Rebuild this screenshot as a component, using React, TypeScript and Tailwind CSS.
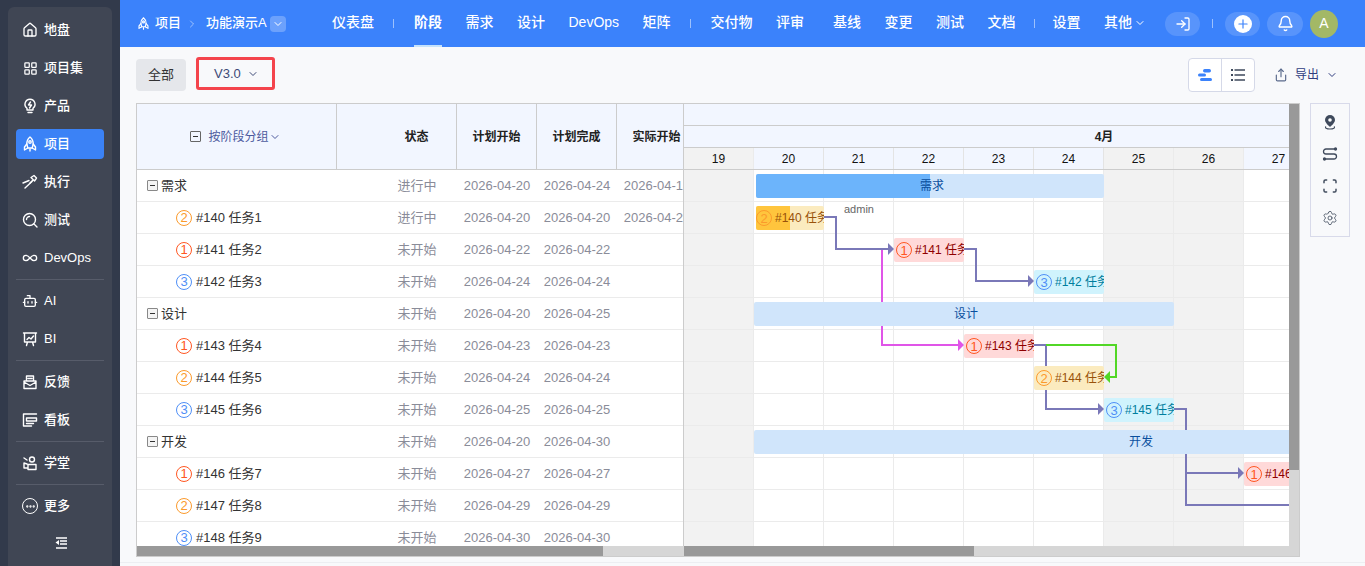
import React from 'react';
import {
  Bell,
  Bot,
  ChevronDown,
  ChevronRight,
  Ellipsis,
  House,
  Infinity as InfinityIcon,
  LayoutGrid,
  LogIn,
  Plus,
  Scan,
  Settings,
  Share,
} from 'lucide-react';

const LABELS = { 1: 'border-[#ff5722] text-[#ff5722]', 2: 'border-[#fb9a2c] text-[#fb9a2c]', 3: 'border-[#4f8ff7] text-[#4f8ff7]' };

const Glyph = ({ size = 16, children }: { size?: number; children: React.ReactNode }) => (
  <svg width={size} height={size} viewBox="0 0 16 16" fill="none" stroke="currentColor" strokeWidth="1.400" strokeLinejoin="round" strokeLinecap="round">
    {children}
  </svg>
);

const RocketIcon = ({ size = 16 }: { size?: number }) => (
  <Glyph size={size}>
    <path d="M8 1c2.500 2 3.200 4.500 3.200 7l-1 4H5.800l-1-4C4.800 5.500 5.500 3 8 1z" />
    <path d="M4.800 8L2.500 11v3l3.300-2M11.200 8l2.300 3v3l-3.300-2M8 13v2" />
    <circle cx="8" cy="6" r="1.200" />
  </Glyph>
);

const BulbIcon = () => (
  <Glyph>
    <path d="M8 1.200a5 5 0 0 0-3 9v1.800h6v-1.800a5 5 0 0 0-3-9zM6 14.500h4" />
    <path d="M8.500 4l-2 3h3l-2 3" />
  </Glyph>
);

const DartIcon = () => (
  <Glyph>
    <path d="M1 9l6-2.500M3 14l7-6.500" />
    <path d="M9 3.500l3.500 3.500 2-3-2.500-2.500zM11 6L8 9" />
  </Glyph>
);

const TestIcon = () => (
  <Glyph>
    <circle cx="7.500" cy="7.500" r="6" />
    <path d="M12 12l3 3M4.500 7.500a3 3 0 0 1 3-3" />
  </Glyph>
);

const ScreenIcon = () => (
  <Glyph>
    <path d="M1.500 2h13M2.500 2v9h11V2M5 8.500l2-2 2 1.500 2.500-3M5.500 11l-1 3.500M10.500 11l1 3.500" />
  </Glyph>
);

const FeedbackIcon = () => (
  <Glyph>
    <path d="M4.500 7V2h7v5M2 7h12v7.500H2zM2 8l6 3.500L14 8M6 4.500h4" />
  </Glyph>
);

const BoardIcon = () => (
  <Glyph>
    <path d="M1.500 2h13M1.500 2v12M4.500 6h10v3h-10zM1.500 14h8M4.500 11.500h7" />
  </Glyph>
);

const SchoolIcon = () => (
  <Glyph>
    <circle cx="10" cy="4.500" r="2.500" />
    <path d="M6 9.500h8v5H6zM2 3l3 2M2 8l3 1M2 8v5h3" />
  </Glyph>
);

const CollapseIcon = () => (
  <svg width="14" height="14" viewBox="0 0 14 14" fill="none" stroke="currentColor" strokeWidth="1.500">
    <path d="M2 2h11M6 5h7M6 8h7M2 12h11" />
    <path d="M5 4v5L1.500 6.500z" fill="currentColor" stroke="none" />
  </svg>
);

const NAV_GROUPS = [
  [
    { name: '地盘', icon: <House size={16} /> },
    { name: '项目集', icon: <LayoutGrid size={15} /> },
    { name: '产品', icon: <BulbIcon /> },
    { name: '项目', icon: <RocketIcon />, active: true },
    { name: '执行', icon: <DartIcon /> },
    { name: '测试', icon: <TestIcon /> },
    { name: 'DevOps', icon: <InfinityIcon size={16} /> },
  ],
  [
    { name: 'AI', icon: <Bot size={16} /> },
    { name: 'BI', icon: <ScreenIcon /> },
  ],
  [
    { name: '反馈', icon: <FeedbackIcon /> },
    { name: '看板', icon: <BoardIcon /> },
  ],
  [{ name: '学堂', icon: <SchoolIcon /> }],
];

const Sidebar = () => (
  <aside className="w-[120px] shrink-0 bg-[#323a4b] px-2 pt-[7px]">
    <div className="flex h-[559px] flex-col rounded-t-md bg-[#404654] px-2 pt-[8px] text-[13px] font-medium text-white">
      {NAV_GROUPS.map((group, i) => (
        <div key={i} className="flex flex-col gap-2 border-b border-[#575c6a] pb-[6px] [&:not(:first-child)]:pt-[6px]">
          {group.map(item => (
            <div key={item.name} className={`flex h-[30px] items-center gap-[6px] rounded pl-[6px] ${item.active ? 'bg-[#3b82f6]' : ''}`}>
              <span className="flex w-4 justify-center">{item.icon}</span>
              <span>{item.name}</span>
            </div>
          ))}
        </div>
      ))}
      <div className="flex h-[30px] items-center gap-[6px] pl-[6px] pt-[12px]">
        <span className="flex h-4 w-4 items-center justify-center rounded-full border border-white">
          <Ellipsis size={11} strokeWidth={3} />
        </span>
        <span>更多</span>
      </div>
      <div className="mt-[21px] flex h-[14px] justify-center pl-[1px]">
        <CollapseIcon />
      </div>
    </div>
  </aside>
);

const Sep = () => <span className="h-[9px] w-px bg-white/50" />;

const NavText = ({ children, active }: { children: React.ReactNode; active?: boolean }) => (
  <span className={`relative flex h-[47px] items-center pb-[2px] ${active ? 'font-bold' : 'font-medium'}`}>
    {children}
    {active && <span className="absolute bottom-0 left-0 right-0 h-[2px] bg-[#c5e2fb]" />}
  </span>
);

const Topbar = () => (
  <header className="flex h-[47px] shrink-0 items-center bg-[#3b82fb] pr-[27px] text-white">
    <div className="flex w-[212px] items-center pl-[17px] text-[13px] font-medium">
      <RocketIcon size={13} />
      <span className="mb-[2px] ml-[5px]">项目</span>
      <ChevronRight size={12} className="ml-[5px] text-white/50" />
      <span className="mb-[2px] ml-2">功能演示A</span>
      <span className="ml-[3px] flex h-4 w-4 items-center justify-center rounded-sm bg-white/25">
        <ChevronDown size={12} />
      </span>
    </div>
    <nav className="flex items-center text-[14px]">
      <NavText>仪表盘</NavText>
      <span className="ml-[19px] mr-5 flex"><Sep /></span>
      <div className="flex gap-[23.500px]">
        <NavText active>阶段</NavText>
        <NavText>需求</NavText>
        <NavText>设计</NavText>
        <NavText>DevOps</NavText>
        <NavText>矩阵</NavText>
      </div>
      <span className="ml-[19px] mr-5 flex"><Sep /></span>
      <div className="flex gap-[23.500px]">
        <NavText>交付物</NavText>
        <NavText>评审</NavText>
      </div>
      <div className="ml-[29px] flex gap-[23.500px]">
        <NavText>基线</NavText>
        <NavText>变更</NavText>
        <NavText>测试</NavText>
        <NavText>文档</NavText>
      </div>
      <span className="ml-[18px] mr-[18px] flex"><Sep /></span>
      <div className="flex gap-[23.500px]">
        <NavText>设置</NavText>
        <NavText>
          其他
          <ChevronDown size={12} className="ml-[2px]" />
        </NavText>
      </div>
    </nav>
    <div className="ml-auto flex h-6 w-[35px] items-center justify-center rounded-full bg-white/15">
      <LogIn size={16} />
    </div>
    <span className="mx-3 flex"><Sep /></span>
    <div className="flex h-6 w-[35px] items-center justify-center rounded-full bg-white/15">
      <span className="flex h-[18px] w-[18px] items-center justify-center rounded-full bg-white text-[#3b82fb]">
        <Plus size={14} />
      </span>
    </div>
    <div className="ml-[7px] flex h-6 w-[36px] items-center justify-center rounded-full bg-white/15">
      <Bell size={17} />
    </div>
    <div className="ml-[7px] flex h-7 w-7 items-center justify-center rounded-full bg-[#a3b866] text-[14px]">A</div>
  </header>
);

const GanttViewIcon = () => (
  <svg width="16" height="16" viewBox="0 0 16 16" fill="#3b82fb">
    <rect x="6" y="2" width="8" height="3.500" rx="1.700" />
    <rect x="1" y="6.500" width="8" height="3" rx="1.500" />
    <rect x="3" y="11" width="12" height="3" rx="1.500" />
  </svg>
);

const ListViewIcon = () => (
  <svg width="16" height="14" viewBox="0 0 16 14" fill="none" stroke="#3f4a5c" strokeWidth="1.400">
    <path d="M4.500 2h10.500M4.500 7h10.500M4.500 12h10.500" />
    <path d="M1 2h2M1 7h2M1 12h2" strokeWidth="2" />
  </svg>
);

const Toolbar = () => (
  <div className="flex h-14 shrink-0 items-center pl-4 pr-[27px]">
    <div className="flex h-8 w-[50px] items-center justify-center rounded-sm bg-[#e5e7eb] text-[13px] text-[#333]">全部</div>
    <div className="mb-[3px] ml-[10px] flex h-[33px] w-[79px] items-center gap-[6px] rounded-[3px] border-[3px] border-[#f4444c] pl-[15px] text-[13px] text-[#3d4a77]">
      V3.0
      <ChevronDown size={12} />
    </div>
    <div className="ml-auto flex h-[34px] w-[67px] rounded-sm border border-[#d5d9e8] bg-white">
      <span className="flex w-[33px] items-center justify-center border-r border-[#d5d9e8]"><GanttViewIcon /></span>
      <span className="flex flex-1 items-center justify-center"><ListViewIcon /></span>
    </div>
    <div className="ml-[19px] flex items-center text-[12px] text-[#2f3c7e]">
      <Share size={14} className="text-[#5a6a8c]" />
      <span className="ml-[7px]">导出</span>
      <ChevronDown size={12} className="ml-[7px]" />
    </div>
  </div>
);

type Row = { name: string; status: string; start: string; end: string; actual?: string; pri?: 1 | 2 | 3 };

const ROWS: Row[] = [
  { name: '需求', status: '进行中', start: '2026-04-20', end: '2026-04-24', actual: '2026-04-18' },
  { name: '#140 任务1', pri: 2, status: '进行中', start: '2026-04-20', end: '2026-04-20', actual: '2026-04-20' },
  { name: '#141 任务2', pri: 1, status: '未开始', start: '2026-04-22', end: '2026-04-22' },
  { name: '#142 任务3', pri: 3, status: '未开始', start: '2026-04-24', end: '2026-04-24' },
  { name: '设计', status: '未开始', start: '2026-04-20', end: '2026-04-25' },
  { name: '#143 任务4', pri: 1, status: '未开始', start: '2026-04-23', end: '2026-04-23' },
  { name: '#144 任务5', pri: 2, status: '未开始', start: '2026-04-24', end: '2026-04-24' },
  { name: '#145 任务6', pri: 3, status: '未开始', start: '2026-04-25', end: '2026-04-25' },
  { name: '开发', status: '未开始', start: '2026-04-20', end: '2026-04-30' },
  { name: '#146 任务7', pri: 1, status: '未开始', start: '2026-04-27', end: '2026-04-27' },
  { name: '#147 任务8', pri: 2, status: '未开始', start: '2026-04-29', end: '2026-04-29' },
  { name: '#148 任务9', pri: 3, status: '未开始', start: '2026-04-30', end: '2026-04-30' },
];

const Pri = ({ n }: { n: 1 | 2 | 3 }) => (
  <span className={`flex h-4 w-4 shrink-0 items-center justify-center rounded-full border text-[13px] leading-none ${LABELS[n]}`}>{n}</span>
);

const MinusBox = ({ className }: { className: string }) => (
  <span className={`flex h-[11px] w-[11px] shrink-0 items-center justify-center rounded-[1px] border ${className}`}>
    <span className="h-px w-[5px] bg-[#333]" />
  </span>
);

const HeadCell = ({ children, className }: { children: React.ReactNode; className: string }) => (
  <div className={`flex items-center justify-center border-r border-[#ccc] text-[12px] font-bold text-[#222] ${className}`}>{children}</div>
);

const LeftTable = () => (
  <div className="w-[547px] shrink-0 overflow-hidden border-r border-[#ccc]">
    <div className="w-[600px]">
      <div className="flex h-[66px] border-b border-[#ccc] bg-[#f2f6ff]">
        <div className="flex w-[200px] items-center justify-center border-r border-[#ccc] pr-[2px] text-[12px] text-[#4d5a9e]">
          <MinusBox className="border-[#666]" />
          <span className="ml-[7px]">按阶段分组</span>
          <ChevronDown size={12} />
        </div>
        <HeadCell className="w-[120px] pl-[40px]">状态</HeadCell>
        <HeadCell className="w-[80px]">计划开始</HeadCell>
        <HeadCell className="w-[80px]">计划完成</HeadCell>
        <HeadCell className="w-[80px]">实际开始</HeadCell>
      </div>
      {ROWS.map(row => (
        <div key={row.name} className="flex h-8 items-center border-b border-[#ebebeb] text-[13px] text-[#8a8c99]">
          <div className={`flex w-[200px] items-center text-[#333] ${row.pri ? 'pl-[39px]' : 'pl-[10px]'}`}>
            {row.pri ? <Pri n={row.pri} /> : <MinusBox className="border-[#888] bg-[#f4f4f4]" />}
            <span className={row.pri ? 'ml-1' : 'ml-[3px]'}>{row.name}</span>
          </div>
          <div className="w-[120px] pl-[40px] text-center">{row.status}</div>
          <div className="w-[80px] text-center">{row.start}</div>
          <div className="w-[80px] text-center">{row.end}</div>
          <div className="w-[80px] text-center">{row.actual}</div>
        </div>
      ))}
    </div>
  </div>
);

const DAYS = [19, 20, 21, 22, 23, 24, 25, 26, 27];
const isOff = (d: number) => d === 19 || d === 25 || d === 26;

type Bar = { x: number; y: number; w: number; label: string; pri?: 1 | 2 | 3; progress?: number };

const GROUP_BARS: Bar[] = [
  { x: 72, y: 4, w: 348, label: '需求', progress: 174 },
  { x: 70, y: 132, w: 420, label: '设计' },
  { x: 70, y: 260, w: 770, label: '开发' },
];

const TASK_BARS: Bar[] = [
  { x: 72, y: 36, w: 68, label: '#140 任务1', pri: 2, progress: 34 },
  { x: 210, y: 68, w: 70, label: '#141 任务2', pri: 1 },
  { x: 350, y: 100, w: 70, label: '#142 任务3', pri: 3 },
  { x: 280, y: 164, w: 70, label: '#143 任务4', pri: 1 },
  { x: 350, y: 196, w: 70, label: '#144 任务5', pri: 2 },
  { x: 420, y: 228, w: 70, label: '#145 任务6', pri: 3 },
  { x: 560, y: 292, w: 70, label: '#146 任务7', pri: 1 },
];

const TASK_TONE = {
  1: 'bg-[#ffd9d9] text-[#8f0000]',
  2: 'bg-[#fbebbf] text-[#99520a]',
  3: 'bg-[#d0f3fd] text-[#007e9e]',
};

// coordinates are relative to the chart body: x - 684, y - 170
const Links = () => (
  <svg className="absolute left-0 top-0" width="605" height="376" fill="none" strokeWidth="2">
    <path d="M198 79h6M198 79v96h76" stroke="#e055e8" />
    <path d="M274 169l6 6-6 6z" fill="#e055e8" />
    <g stroke="#7a78b8">
      <path d="M140 47h12v32h52" />
      <path d="M280 79h12v32h52" />
      <path d="M350 175h12v64h52" />
      <path d="M490 239h12v64h52M502 303v32h110" />
    </g>
    <g fill="#7a78b8">
      <path d="M204 73l6 6-6 6z" />
      <path d="M344 105l6 6-6 6z" />
      <path d="M414 233l6 6-6 6z" />
      <path d="M554 297l6 6-6 6z" />
    </g>
    <path d="M362 175h70v32h-8" stroke="#52d726" />
    <path d="M426 201l-6 6 6 6z" fill="#52d726" />
  </svg>
);

const Chart = () => (
  <div className="min-w-0 flex-1 overflow-hidden">
    <div className="h-[22px] w-[630px] border-b border-[#ccc] bg-[#f2f6ff]" />
    <div className="flex h-[22px] w-[630px] items-center justify-center border-b border-[#ccc] bg-[#f2f6ff] pl-[210px] text-[12px] font-bold text-[#222]">4月</div>
    <div className="flex h-[22px] w-[630px] border-b border-[#ccc]">
      {DAYS.map(d => (
        <div
          key={d}
          className={`flex w-[70px] shrink-0 items-center justify-center border-r text-[12px] text-[#111] ${isOff(d) ? 'border-[#ebebeb] bg-[#f2f2f2]' : 'border-[#e4e4e4] bg-[#f2f6ff]'}`}
        >
          {d}
        </div>
      ))}
    </div>
    <div className="relative w-[630px]">
      {ROWS.map(row => (
        <div key={row.name} className="flex h-8">
          {DAYS.map(d => (
            <div key={d} className={`w-[70px] shrink-0 border-b border-r border-[#ebebeb] ${isOff(d) ? 'bg-[#f2f2f2]' : 'bg-white'}`} />
          ))}
        </div>
      ))}
      <Links />
      {GROUP_BARS.map(bar => (
        <div
          key={bar.label}
          className="absolute flex h-6 items-center justify-center overflow-hidden rounded-[2px] bg-[#d0e5fb] pl-1 text-[12px] text-[#0a4f9e]"
          style={{ left: bar.x, top: bar.y, width: bar.w }}
        >
          {bar.progress && <span className="absolute bottom-0 left-0 top-0 bg-[#6cb4fb]" style={{ width: bar.progress }} />}
          <span className="relative">{bar.label}</span>
        </div>
      ))}
      {TASK_BARS.map(bar => (
        <div
          key={bar.label}
          className={`absolute flex h-6 items-center overflow-hidden whitespace-nowrap rounded-[2px] text-[12px] ${bar.progress ? '' : 'pl-[2px]'} ${TASK_TONE[bar.pri!]}`}
          style={{ left: bar.x, top: bar.y, width: bar.w }}
        >
          {bar.progress && <span className="absolute bottom-0 left-0 top-0 bg-[#ffc53d]" style={{ width: bar.progress }} />}
          <span className="relative flex items-center">
            <Pri n={bar.pri!} />
            <span className="ml-[3px]">{bar.label}</span>
          </span>
        </div>
      ))}
      <span className="absolute left-[160px] top-[31px] text-[11px] text-[#666]">admin</span>
    </div>
  </div>
);

const Gantt = () => (
  <div className="flex h-[454px] w-[1164px] shrink-0 border border-[#ccc] bg-white">
    <div className="flex w-[1152px] flex-col">
      <div className="flex h-[442px] overflow-hidden">
        <LeftTable />
        <Chart />
      </div>
      <div className="flex h-[10px] bg-[#d6d6d6]">
        <div className="w-[547px]">
          <div className="h-full w-[466px] bg-[#999]" />
        </div>
        <div className="h-full w-[290px] bg-[#999]" />
      </div>
    </div>
    <div className="w-[10px] bg-[#d6d6d6]">
      <div className="h-[366px] bg-[#999]" />
    </div>
  </div>
);

const PinIcon = () => (
  <svg width="16" height="16" viewBox="0 0 16 16" fill="none">
    <path d="M8 1a5 5 0 0 0-5 5c0 3 5 7 5 7s5-4 5-7a5 5 0 0 0-5-5z" fill="#3f4a5c" />
    <circle cx="8" cy="6" r="1.800" fill="#fff" />
    <path d="M4 12.500c-1.500 1.300.5 2.500 4 2.500s5.500-1.200 4-2.500" stroke="#3f4a5c" strokeWidth="1.100" />
  </svg>
);

const RouteIcon = () => (
  <svg width="16" height="16" viewBox="0 0 16 16" fill="none" stroke="#3f4a5c" strokeWidth="1.300">
    <path d="M13 3H4a2.500 2.500 0 0 0 0 5h8a2.500 2.500 0 0 1 0 5H3" />
    <circle cx="13.500" cy="3" r="1" fill="#3f4a5c" />
    <circle cx="2.500" cy="13" r="1" fill="#3f4a5c" />
  </svg>
);

const ToolPanel = () => (
  <div className="ml-[10px] flex h-[134px] w-10 flex-col items-center gap-4 border border-[#d8daea] pt-[10px] text-[#3f4a5c]">
    <PinIcon />
    <RouteIcon />
    <Scan size={16} strokeWidth={2.200} />
    <Settings size={16} strokeWidth={1.200} />
  </div>
);

export default function App() {
  return (
    <div className="flex h-[566px] w-[1365px] overflow-hidden bg-[#f8f9fb] [font-family:'Liberation_Sans','Noto_Sans_CJK_SC',sans-serif]">
      <Sidebar />
      <main className="flex min-w-0 flex-1 flex-col">
        <Topbar />
        <Toolbar />
        <div className="flex pl-4">
          <Gantt />
          <ToolPanel />
        </div>
        <div className="mt-[5px] border-t border-[#eceef2]" />
      </main>
    </div>
  );
}
